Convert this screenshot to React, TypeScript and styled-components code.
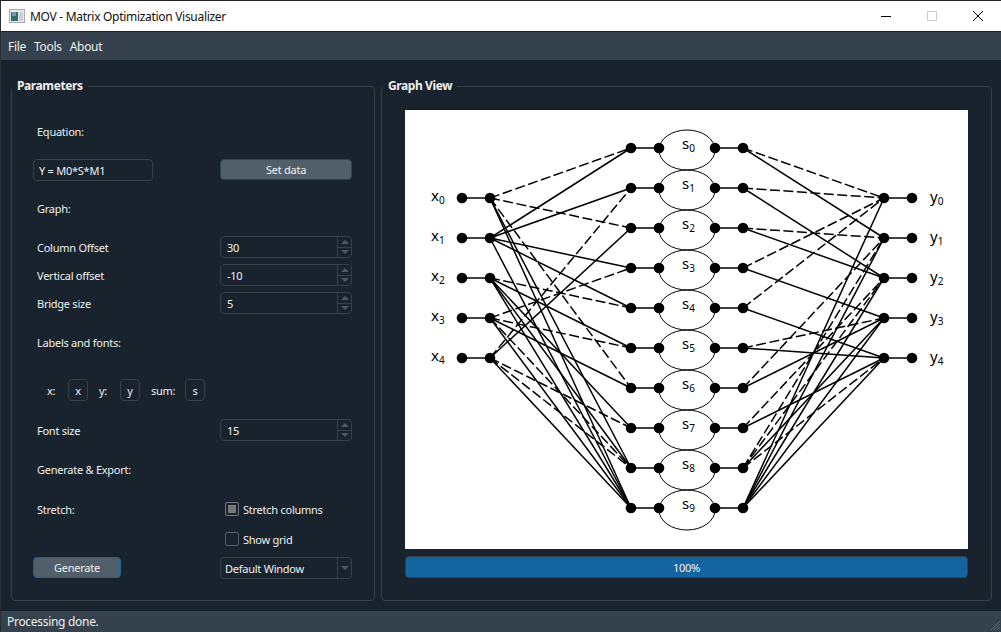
import React from 'react'
import styled, { createGlobalStyle } from 'styled-components'

const GlobalStyle = createGlobalStyle`
  html, body {
    margin: 0;
    padding: 0;
    background: #19232d;
  }
  * { box-sizing: border-box; }
`

const Window = styled.div`
  width: 1001px;
  height: 632px;
  display: flex;
  flex-direction: column;
  overflow: hidden;
  background: #19232d;
  color: #f0f0f0;
  font-family: 'Noto Sans', 'Open Sans', sans-serif;
  font-size: 11px;
  letter-spacing: -0.25px;
  border-left: 1px solid #2a2f35;
`

const TitleBar = styled.div`
  height: 32px;
  flex: none;
  display: flex;
  align-items: center;
  padding: 0 0 0 8px;
  background: #fff;
  color: #111;
  border-top: 1px solid #222;
  border-bottom: 1px solid #1a232c;
`

const TitleText = styled.span`
  margin-left: 5px;
  flex: 1;
  font-size: 12px;
  letter-spacing: -0.3px;
`

const CaptionButton = styled.div`
  width: 46px;
  height: 30px;
  display: flex;
  align-items: center;
  justify-content: center;
`

const MenuBar = styled.div`
  height: 28px;
  flex: none;
  display: flex;
  align-items: center;
  gap: 8px;
  padding-left: 7px;
  background: #35424d;
`

const MenuItem = styled.span`
  font-size: 12px;
  letter-spacing: -0.3px;
`

const Main = styled.div`
  flex: 1;
  display: flex;
  gap: 6px;
  padding: 26px 9px 10px 10px;
`

const Group = styled.div<{ $width?: number }>`
  position: relative;
  height: 515px;
  border: 1px solid #32414b;
  border-radius: 4px;
  ${({ $width }) => ($width ? `width: ${$width}px; flex: none;` : 'flex: 1;')}
`

const GroupTitle = styled.span<{ $left: number }>`
  position: absolute;
  left: ${({ $left }) => $left}px;
  top: -9px;
  padding: 0 5px;
  background: #19232d;
  font-weight: 700;
  font-size: 12px;
  letter-spacing: -0.4px;
  line-height: 16px;
`

const Form = styled.div`
  display: flex;
  flex-direction: column;
  padding: 34px 0 0 21px;
`

const Row = styled.div<{ $top: number; $height: number }>`
  display: grid;
  grid-template-columns: 187px 132px;
  align-items: center;
  height: ${({ $height }) => $height}px;
  margin-top: ${({ $top }) => $top}px;
`

const Label = styled.span`
  padding-left: 4px;
  color: #f0f0f0;
`

const Field = styled.div<{ $width?: number; $inset?: number }>`
  display: flex;
  align-items: center;
  height: 22px;
  width: ${({ $width }) => ($width ? `${$width}px` : '100%')};
  padding-left: ${({ $inset }) => $inset ?? 6}px;
  border: 1px solid #32414b;
  border-radius: 4px;
  background: #19232d;
`

const FieldValue = styled.span`
  flex: 1;
`

const Button = styled.div<{ $width?: number; $active?: boolean }>`
  display: flex;
  align-items: center;
  justify-content: center;
  align-self: start;
  height: 21px;
  width: ${({ $width }) => ($width ? `${$width}px` : '100%')};
  background: #505f69;
  border: 1px solid ${({ $active }) => ($active ? '#1464a0' : '#32414b')};
  border-radius: 4px;
`

const SpinButtons = styled.div`
  width: 14px;
  height: 100%;
  display: flex;
  flex-direction: column;
  border-left: 1px solid #32414b;
`

const SpinCell = styled.div<{ $down?: boolean }>`
  flex: 1;
  display: flex;
  align-items: center;
  justify-content: center;
  ${({ $down }) => ($down ? 'border-top: 1px solid #32414b;' : '')}
`

const Arrow = styled.div<{ $down?: boolean }>`
  width: 0;
  height: 0;
  border-left: 4px solid transparent;
  border-right: 4px solid transparent;
  ${({ $down }) => ($down ? 'border-top: 4px solid #4a5862;' : 'border-bottom: 4px solid #4a5862;')}
`

const ComboArrow = styled.div`
  width: 14px;
  height: 100%;
  display: flex;
  align-items: center;
  justify-content: center;
  border-left: 1px solid #32414b;
`

const ShortFields = styled.div`
  display: flex;
  align-items: center;
  height: 22px;
  padding-left: 14px;
`

const ShortLabel = styled.span<{ $width: number }>`
  width: ${({ $width }) => $width}px;
`

const ShortBox = styled.div`
  width: 20px;
  height: 22px;
  margin-right: 11px;
  display: flex;
  align-items: center;
  justify-content: center;
  border: 1px solid #32414b;
  border-radius: 4px;
`

const CheckLine = styled.div`
  display: flex;
  align-items: center;
  gap: 4px;
  padding-left: 5px;
`

const CheckBox = styled.div<{ $checked?: boolean }>`
  width: 14px;
  height: 14px;
  display: flex;
  align-items: center;
  justify-content: center;
  border: 1px solid ${({ $checked }) => ($checked ? '#787878' : '#505f69')};
  border-radius: 2px;
  &::after {
    content: '';
    width: 8px;
    height: 8px;
    background: ${({ $checked }) => ($checked ? '#787878' : 'transparent')};
  }
`

const GraphColumn = styled.div`
  display: flex;
  flex-direction: column;
  gap: 7px;
  padding: 23px 23px 0 23px;
`

const Canvas = styled.svg`
  display: block;
  width: 563px;
  height: 439px;
  background: #fff;
`

const Progress = styled.div`
  height: 22px;
  width: 563px;
  display: flex;
  align-items: center;
  justify-content: center;
  background: #1464a0;
  border: 1px solid #32414b;
  border-radius: 4px;
`

const StatusBar = styled.div`
  position: relative;
  height: 21px;
  flex: none;
  display: flex;
  align-items: center;
  padding-left: 6px;
  background: #35424d;
  font-size: 12px;
  letter-spacing: -0.3px;
`

const Grip = styled.svg`
  position: absolute;
  right: 0;
  bottom: 1px;
`

const XS = [198, 238, 278, 318, 358]
const SS = [148, 188, 228, 268, 308, 348, 388, 428, 468, 508]

// [x or y index, s index, dashed]
const LEFT_EDGES: [number, number, boolean][] = [
  [0, 0, true], [0, 2, true], [0, 6, true], [0, 8, false], [0, 9, false],
  [1, 0, false], [1, 1, false], [1, 3, false], [1, 4, false], [1, 9, false],
  [2, 4, true], [2, 5, false], [2, 7, false], [2, 8, false], [2, 9, false],
  [3, 3, true], [3, 5, true], [3, 6, false], [3, 8, true], [3, 9, false],
  [4, 1, true], [4, 2, false], [4, 7, true], [4, 8, true], [4, 9, false]
]

const RIGHT_EDGES: [number, number, boolean][] = [
  [0, 0, true], [0, 1, true], [0, 3, true], [0, 4, true], [0, 9, false],
  [1, 0, false], [1, 2, true], [1, 6, true], [1, 8, true], [1, 9, false],
  [2, 1, false], [2, 2, false], [2, 7, true], [2, 8, true], [2, 9, false],
  [3, 3, false], [3, 5, true], [3, 6, false], [3, 8, false], [3, 9, false],
  [4, 4, false], [4, 5, false], [4, 7, false], [4, 8, true], [4, 9, false]
]

const Edge = ({ x1, y1, x2, y2, dashed }: { x1: number; y1: number; x2: number; y2: number; dashed?: boolean }) => (
  <line x1={x1} y1={y1} x2={x2} y2={y2} stroke="#000" strokeWidth={1.5} strokeDasharray={dashed ? '10 3.5' : undefined} />
)

const Node = ({ x, y }: { x: number; y: number }) => <circle cx={x} cy={y} r={5.3} fill="#000" />

const SubLabel = ({ x, y, name, index }: { x: number; y: number; name: string; index: number }) => (
  <text x={x} y={y} fontFamily="'Noto Sans', sans-serif" fontSize={15} letterSpacing={0} fill="#000">
    {name}
    <tspan fontSize={10} dy={2.5}>{index}</tspan>
  </text>
)

function Graph() {
  return (
    <Canvas viewBox="405 110 563 439">
      {LEFT_EDGES.map(([a, b, dashed], i) => (
        <Edge key={`l${i}`} x1={490} y1={XS[a]} x2={631} y2={SS[b]} dashed={dashed} />
      ))}
      {RIGHT_EDGES.map(([a, b, dashed], i) => (
        <Edge key={`r${i}`} x1={743} y1={SS[b]} x2={884} y2={XS[a]} dashed={dashed} />
      ))}
      {XS.map((y, i) => (
        <g key={y}>
          <Edge x1={462} y1={y} x2={490} y2={y} />
          <Edge x1={884} y1={y} x2={912} y2={y} />
          <Node x={462} y={y} />
          <Node x={490} y={y} />
          <Node x={884} y={y} />
          <Node x={912} y={y} />
          <SubLabel x={431} y={y + 3} name="x" index={i} />
          <SubLabel x={930} y={y + 4} name="y" index={i} />
        </g>
      ))}
      {SS.map((y, i) => (
        <g key={y}>
          <Edge x1={631} y1={y} x2={659} y2={y} />
          <Edge x1={715} y1={y} x2={743} y2={y} />
          <ellipse cx={687} cy={y + 2} rx={28} ry={20} fill="none" stroke="#000" strokeWidth={1} />
          <Node x={631} y={y} />
          <Node x={659} y={y} />
          <Node x={715} y={y} />
          <Node x={743} y={y} />
          <SubLabel x={682} y={y + 1} name="s" index={i} />
        </g>
      ))}
    </Canvas>
  )
}

function Spin({ value }: { value: string }) {
  return (
    <Field>
      <FieldValue>{value}</FieldValue>
      <SpinButtons>
        <SpinCell><Arrow /></SpinCell>
        <SpinCell $down><Arrow $down /></SpinCell>
      </SpinButtons>
    </Field>
  )
}

export default function App() {
  return (
    <Window>
      <GlobalStyle />
      <TitleBar>
        <svg width="16" height="14" viewBox="0 0 16 14">
          <rect x="0.5" y="0.5" width="15" height="13" fill="#e8e8e8" stroke="#aaa" />
          <rect x="2" y="3" width="7" height="9" fill="#2f6f6a" />
          <rect x="3" y="3" width="4" height="4" fill="#7d93a8" />
          <rect x="10" y="3" width="4" height="9" fill="#c9d0d6" />
        </svg>
        <TitleText>MOV - Matrix Optimization Visualizer</TitleText>
        <CaptionButton>
          <svg width="10" height="10" viewBox="0 0 10 10"><path d="M0 5.5H10" stroke="#000" /></svg>
        </CaptionButton>
        <CaptionButton>
          <svg width="10" height="10" viewBox="0 0 10 10"><rect x="0.5" y="0.5" width="9" height="9" fill="none" stroke="#ccc" /></svg>
        </CaptionButton>
        <CaptionButton>
          <svg width="10" height="10" viewBox="0 0 10 10"><path d="M0 0L10 10M10 0L0 10" stroke="#000" /></svg>
        </CaptionButton>
      </TitleBar>
      <MenuBar>
        <MenuItem>File</MenuItem>
        <MenuItem>Tools</MenuItem>
        <MenuItem>About</MenuItem>
      </MenuBar>
      <Main>
        <Group $width={364}>
          <GroupTitle $left={0}>Parameters</GroupTitle>
          <Form>
            <Row $top={0} $height={20}><Label>Equation:</Label></Row>
            <Row $top={18} $height={22}>
              <Field $width={120} $inset={5}><FieldValue>Y = M0*S*M1</FieldValue></Field>
              <Button>Set data</Button>
            </Row>
            <Row $top={17} $height={20}><Label>Graph:</Label></Row>
            <Row $top={18} $height={22}><Label>Column Offset</Label><Spin value="30" /></Row>
            <Row $top={6} $height={22}><Label>Vertical offset</Label><Spin value="-10" /></Row>
            <Row $top={6} $height={22}><Label>Bridge size</Label><Spin value="5" /></Row>
            <Row $top={18} $height={20}><Label>Labels and fonts:</Label></Row>
            <Row $top={27} $height={22}>
              <ShortFields>
                <ShortLabel $width={21}>x:</ShortLabel>
                <ShortBox>x</ShortBox>
                <ShortLabel $width={21}>y:</ShortLabel>
                <ShortBox>y</ShortBox>
                <ShortLabel $width={34}>sum:</ShortLabel>
                <ShortBox>s</ShortBox>
              </ShortFields>
            </Row>
            <Row $top={18} $height={22}><Label>Font size</Label><Spin value="15" /></Row>
            <Row $top={18} $height={20}><Label>Generate &amp; Export:</Label></Row>
            <Row $top={20} $height={20}>
              <Label>Stretch:</Label>
              <CheckLine><CheckBox $checked />Stretch columns</CheckLine>
            </Row>
            <Row $top={10} $height={20}>
              <span />
              <CheckLine><CheckBox />Show grid</CheckLine>
            </Row>
            <Row $top={8} $height={22}>
              <Button $width={88} $active>Generate</Button>
              <Field $inset={4}>
                <FieldValue>Default Window</FieldValue>
                <ComboArrow><Arrow $down /></ComboArrow>
              </Field>
            </Row>
          </Form>
        </Group>
        <Group>
          <GroupTitle $left={1}>Graph View</GroupTitle>
          <GraphColumn>
            <Graph />
            <Progress>100%</Progress>
          </GraphColumn>
        </Group>
      </Main>
      <StatusBar>
        Processing done.
        <Grip width="11" height="11" viewBox="0 0 11 11">
          <path d="M1 10L10 1M4 10L10 4M7 10L10 7" stroke="#5a6670" />
        </Grip>
      </StatusBar>
    </Window>
  )
}
